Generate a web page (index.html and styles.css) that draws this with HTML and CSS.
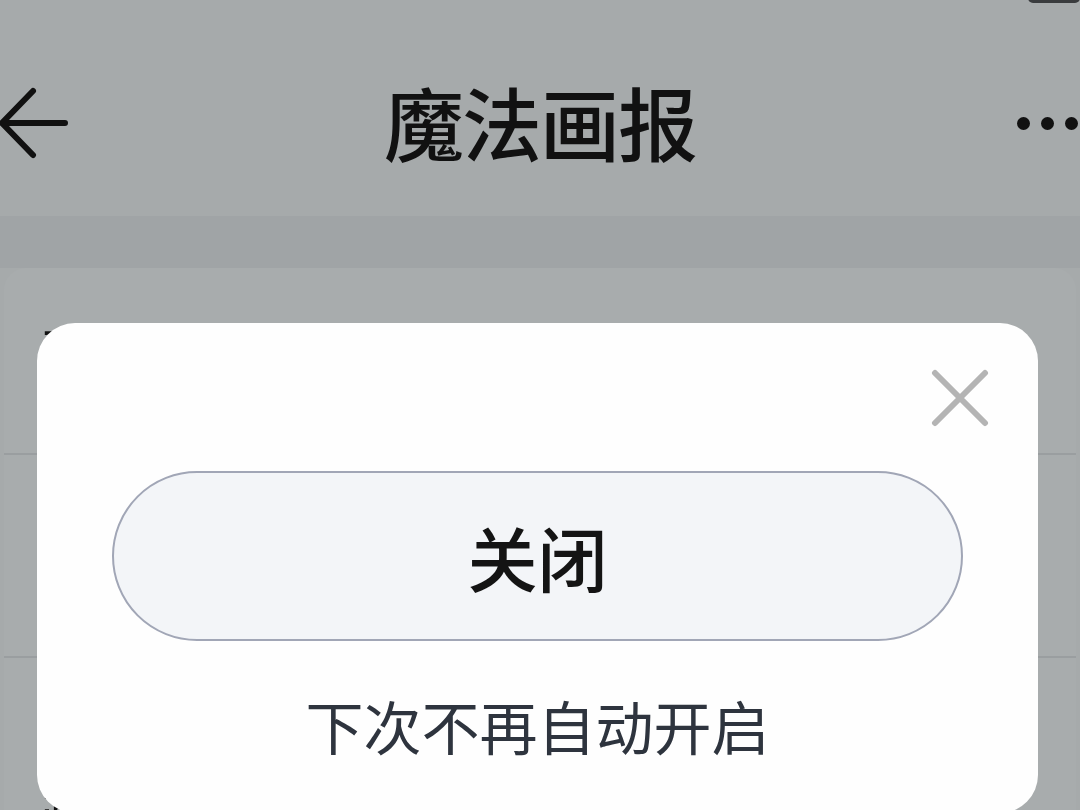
FILE: index.html
```html
<!DOCTYPE html>
<html>
    <head>
        <meta charset="utf-8">
        <link rel="stylesheet" href="styles.css">
    </head>
    <body>
        <div class="status">
            <span class="time">10:30</span>
            <span class="battery"></span>
        </div>

        <div class="navbar">
            <svg class="back" width="72" height="72" viewBox="0 0 72 72">
                <path d="M68 36 H5 M36 4 L5 36 L36 68" fill="none" stroke="#111" stroke-width="6" stroke-linecap="round" stroke-linejoin="round"/>
            </svg>
            <div class="title">魔法画报</div>
            <div class="more"><i></i><i></i><i></i></div>
        </div>

        <div class="band"></div>

        <div class="card">
            <div class="row first"><span class="label">开启魔法画报</span></div>
            <div class="row second"><span class="label">更换频率</span></div>
            <div class="row third"><span class="label">画报订阅</span></div>
        </div>

        <!-- popup over the settings list -->
        <div class="dialog">
            <svg class="close" width="58" height="58" viewBox="0 0 58 58">
                <path d="M4 4 L54 54 M54 4 L4 54" stroke="#b4b4b4" stroke-width="6" stroke-linecap="round"/>
            </svg>
            <div class="btn">关闭</div>
            <div class="hint">下次不再自动开启</div>
        </div>
    </body>
</html>
```

FILE: styles.css
```css
body {
    margin: 0;
    width: 1080px;
    height: 810px;
    overflow: hidden;
    position: relative;
    background: #a6aaab;
    font-family: "Noto Sans CJK SC", sans-serif;
}

.status {
    height: 30px;
    display: flex;
    justify-content: space-between;
    align-items: flex-start;
}
.time {
    font-family: "Liberation Sans", sans-serif;
    font-size: 40px;
    line-height: 40px;
    letter-spacing: 3px;
    margin: -35px 0 0 10px;
    color: #2a2a2a;
}
.battery {
    width: 52px;
    height: 26px;
    margin-top: -23px;
    background: #3a3c3e;
    border-radius: 5px;
}

.navbar {
    height: 186px;
    display: grid;
    grid-template-columns: 1fr auto 1fr;
    align-items: center;
}
.back {
    margin-left: -3px;
}
.title {
    font-size: 80px;
    font-weight: 500;
    color: #111;
    letter-spacing: -2px;
    margin-top: -6px;
}
.more {
    justify-self: end;
    display: flex;
    gap: 11px;
    margin-right: 2px;
}
.more i {
    width: 13px;
    height: 13px;
    border-radius: 50%;
    background: #111;
}

.band {
    height: 52px;
    background: #a0a4a6;
}

.card {
    margin: 0 4px;
    height: 560px;
    background: #a8acad;
    border-radius: 22px 22px 0 0;
}
.row {
    padding-left: 36px;
    box-sizing: border-box;
    border-bottom: 2px solid #9a9ea0;
}
.row.first {
    height: 187px;
    padding-top: 48px;
}
.row.second {
    height: 203px;
}
.row.third {
    border-bottom: none;
    padding-top: 122px;
}
.label {
    font-size: 54px;
    line-height: 70px;
    color: #111;
}

.dialog {
    position: absolute;
    left: 37px;
    top: 323px;
    width: 1001px;
    height: 490px;
    box-sizing: border-box;
    padding: 0 75px;
    background: #fefefe;
    border-radius: 38px;
    display: flex;
    flex-direction: column;
    align-items: center;
}
.close {
    position: absolute;
    top: 46px;
    right: 49px;
}
.btn {
    margin-top: 148px;
    width: 100%;
    height: 170px;
    box-sizing: border-box;
    border: 2px solid #a1a6b6;
    border-radius: 85px;
    background: #f3f5f8;
    display: flex;
    align-items: center;
    justify-content: center;
    font-size: 70px;
    font-weight: 500;
    color: #141414;
}
.hint {
    margin-top: 44px;
    font-size: 58px;
    line-height: 80px;
    color: #2e343e;
}
```
